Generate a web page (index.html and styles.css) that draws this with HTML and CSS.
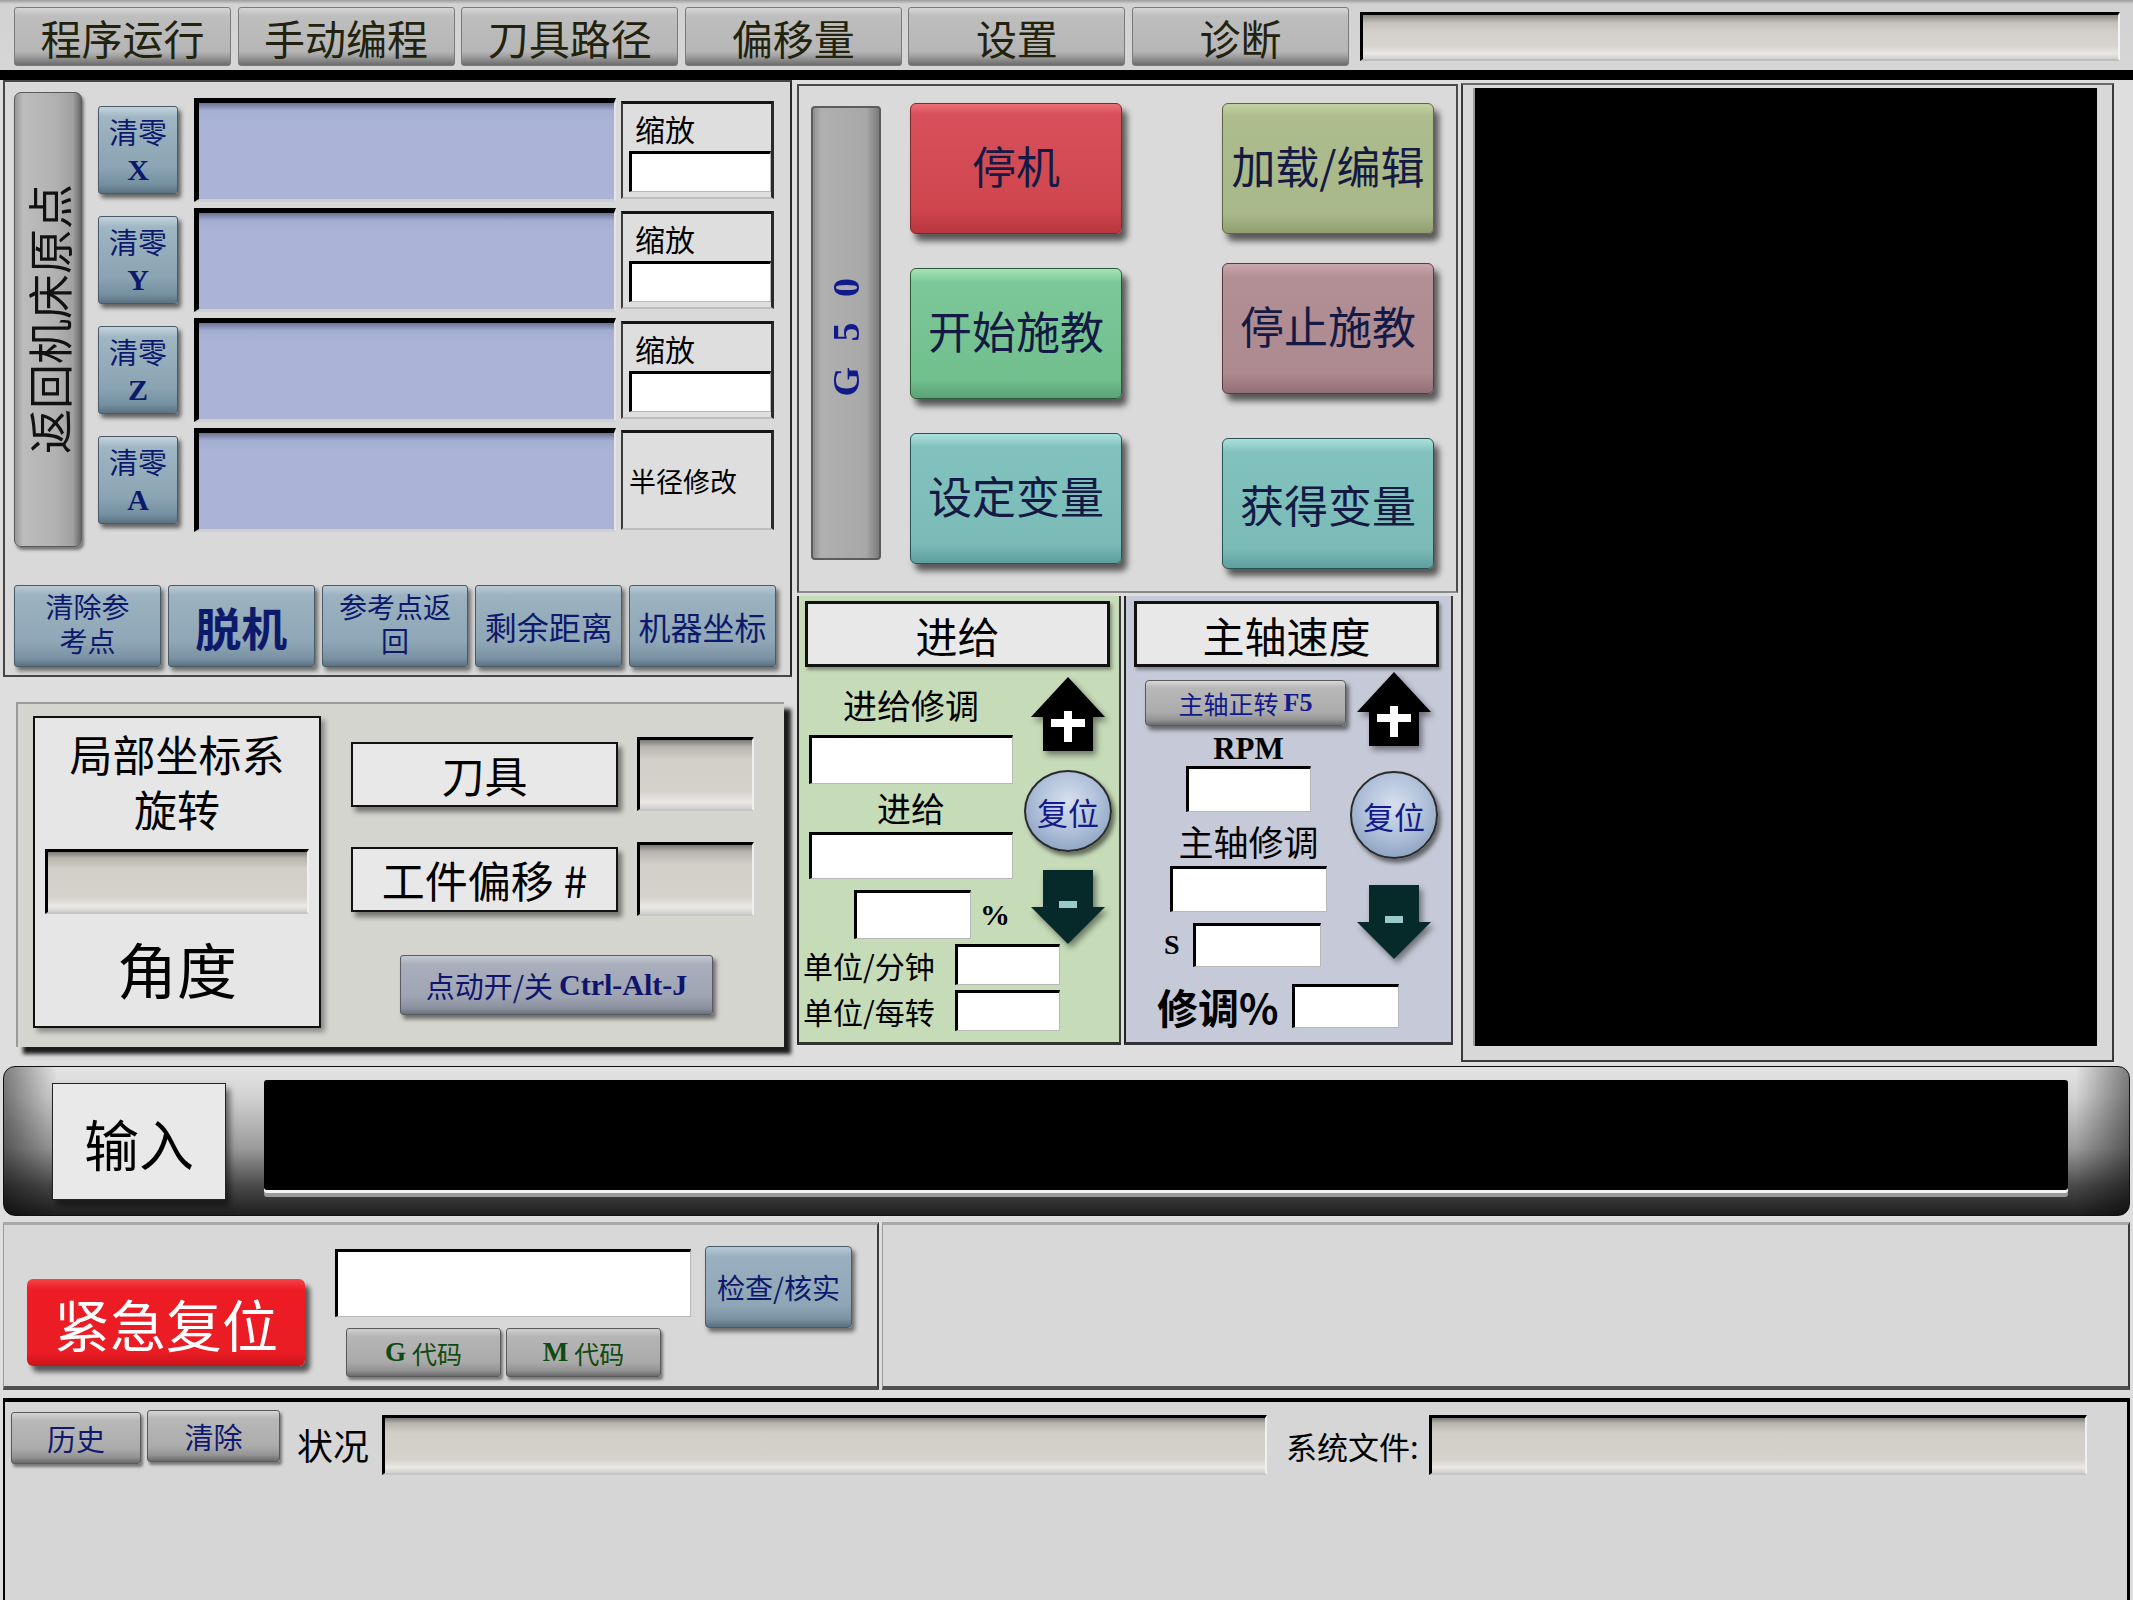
FILE: index.html
```html
<!DOCTYPE html>
<html>
<head>
<meta charset="utf-8">
<title>Mach</title>
<link rel="stylesheet" href="styles.css">
</head>
<body>
<div class="screen">
  <div class="tabbar">
    <div class="tab">程序运行</div>
    <div class="tab">手动编程</div>
    <div class="tab">刀具路径</div>
    <div class="tab">偏移量</div>
    <div class="tab">设置</div>
    <div class="tab">诊断</div>
    <div class="tabfield"></div>
  </div>
  <div class="topsep"></div>

  <div class="main">
    <div class="col-left">
      <div class="dro-panel">
        <div class="dro-top">
          <div class="home"><span>返回机床原点</span></div>
          <div class="axes">
            <div class="axis">
              <div class="zero">清零<b>X</b></div>
              <div class="dro"></div>
              <div class="scale"><span>缩放</span><div class="white-in scale-in"></div></div>
            </div>
            <div class="axis">
              <div class="zero">清零<b>Y</b></div>
              <div class="dro"></div>
              <div class="scale"><span>缩放</span><div class="white-in scale-in"></div></div>
            </div>
            <div class="axis">
              <div class="zero">清零<b>Z</b></div>
              <div class="dro"></div>
              <div class="scale"><span>缩放</span><div class="white-in scale-in"></div></div>
            </div>
            <div class="axis">
              <div class="zero">清零<b>A</b></div>
              <div class="dro"></div>
              <div class="scale radius"><span>半径修改</span></div>
            </div>
          </div>
        </div>
        <div class="dro-bottom">
          <div class="bbtn two">清除参<br>考点</div>
          <div class="bbtn big">脱机</div>
          <div class="bbtn two">参考点返<br>回</div>
          <div class="bbtn">剩余距离</div>
          <div class="bbtn">机器坐标</div>
        </div>
      </div>

      <div class="local-panel">
        <div class="rot-box">
          <div class="rot-title">局部坐标系<br>旋转</div>
          <div class="inset rot-field"></div>
          <div class="rot-angle">角度</div>
        </div>
        <div class="local-right">
          <div class="lrow"><div class="lbl-box">刀具</div><div class="inset small-inset"></div></div>
          <div class="lrow second"><div class="lbl-box">工件偏移 #</div><div class="inset small-inset"></div></div>
          <div class="jog-btn">点动开/关 <b>Ctrl-Alt-J</b></div>
        </div>
      </div>
    </div>

    <div class="col-mid">
      <div class="cmd-panel">
        <div class="g50"><span>G 5 0</span></div>
        <div class="cmd-grid">
          <div class="cbtn red">停机</div>
          <div class="cbtn olive">加载/编辑</div>
          <div class="cbtn green">开始施教</div>
          <div class="cbtn mauve">停止施教</div>
          <div class="cbtn teal">设定变量</div>
          <div class="cbtn teal get">获得变量</div>
        </div>
      </div>

      <div class="rate-row">
        <div class="feed">
          <div class="ptitle">进给</div>
          <div class="rbody">
            <div class="rleft">
              <div class="rlbl l1">进给修调</div>
              <div class="white-in fin1"></div>
              <div class="rlbl l2">进给</div>
              <div class="white-in fin2"></div>
              <div class="pct-row"><div class="white-in fin3"></div><span>%</span></div>
            </div>
            <div class="rright">
              <svg class="arrow up" viewBox="0 0 74 74"><polygon points="37,0 74,40 62,40 62,74 12,74 12,40 0,40" fill="#000"/><rect x="33" y="34" width="8" height="31" fill="#fff"/><rect x="20" y="42" width="34" height="8" fill="#fff"/></svg>
              <div class="reset">复位</div>
              <svg class="arrow down" viewBox="0 0 74 74"><polygon points="12,0 62,0 62,37 74,37 37,74 0,37 12,37" fill="#062a2a"/><rect x="28" y="31" width="18" height="7" fill="#9ccaca"/></svg>
            </div>
          </div>
          <div class="unit-row"><span>单位/分钟</span><div class="white-in uin"></div></div>
          <div class="unit-row u2"><span>单位/每转</span><div class="white-in uin"></div></div>
        </div>

        <div class="spindle">
          <div class="ptitle">主轴速度</div>
          <div class="rbody sbody">
            <div class="rleft">
              <div class="f5btn">主轴正转 <b>F5</b></div>
              <div class="rpm">RPM</div>
              <div class="white-in sin1"></div>
              <div class="rlbl l3">主轴修调</div>
              <div class="white-in sin2"></div>
              <div class="s-row"><b>S</b><div class="white-in sin3"></div></div>
            </div>
            <div class="rright">
              <svg class="arrow up sup" viewBox="0 0 74 74"><polygon points="37,0 74,40 62,40 62,74 12,74 12,40 0,40" fill="#000"/><rect x="33" y="34" width="8" height="31" fill="#fff"/><rect x="20" y="42" width="34" height="8" fill="#fff"/></svg>
              <div class="reset sreset">复位</div>
              <svg class="arrow down sdown" viewBox="0 0 74 74"><polygon points="12,0 62,0 62,37 74,37 37,74 0,37 12,37" fill="#062a2a"/><rect x="28" y="31" width="18" height="7" fill="#9ccaca"/></svg>
            </div>
          </div>
          <div class="ovr-row"><span>修调%</span><div class="white-in oin"></div></div>
        </div>
      </div>
    </div>

    <div class="toolpath"><div class="tp-inner"></div></div>
  </div>

  <div class="inputbar">
    <div class="in-label">输入</div>
    <div class="in-field"></div>
  </div>

  <div class="mdi-row">
    <div class="mdi-panel">
      <div class="estop">紧急复位</div>
      <div class="mdi-col">
        <div class="white-in mdi-in"></div>
        <div class="code-row">
          <div class="code-btn"><b>G</b> 代码</div>
          <div class="code-btn"><b>M</b> 代码</div>
        </div>
      </div>
      <div class="verify">检查/核实</div>
    </div>
    <div class="mdi-empty"></div>
  </div>

  <div class="status">
    <div class="sbtn">历史</div>
    <div class="sbtn clr">清除</div>
    <div class="s-lbl">状况</div>
    <div class="inset s-field1"></div>
    <div class="s-lbl2">系统文件:</div>
    <div class="inset s-field2"></div>
  </div>
</div>
</body>
</html>
```

FILE: styles.css
```css
* { box-sizing: border-box; margin: 0; padding: 0; }
html, body { width: 2133px; height: 1600px; overflow: hidden; }
body {
  background: #dedede;
  font-family: "Liberation Serif", "Noto Sans CJK SC", serif;
  color: #000;
}
b { font-family: "Liberation Serif", "Noto Sans CJK SC", serif; font-weight: 700; }

.screen { width: 2133px; height: 1600px; display: flex; flex-direction: column; }

/* generic fields */
.inset {
  background: linear-gradient(#7c7a76 0, #b8b4ae 10%, #d2cec8 28%, #d5d1cb 75%, #ebe9e6 90%, #cfcfcf 100%);
  border-top: 3px solid #000;
  border-left: 3px solid #000;
  border-right: 2px solid #f0f0f0;
  border-bottom: 2px solid #c6c6c6;
}
.white-in {
  background: #fff;
  border-top: 3px solid #000;
  border-left: 3px solid #000;
  border-right: 1px solid #b8b8b8;
  border-bottom: 1px solid #b8b8b8;
}

/* tab bar */
.tabbar {
  height: 70px;
  display: flex;
  align-items: flex-start;
  gap: 6.6px;
  padding: 7px 0 0 14px;
  background: linear-gradient(#9c9c9c 0, #d2d2d2 4px, #d6d6d6 100%);
}
.tab {
  width: 217px;
  height: 59px;
  display: flex;
  align-items: center;
  justify-content: center;
  font-family: "Noto Sans CJK SC", sans-serif;
  font-size: 41px;
  color: #22220e;
  background: linear-gradient(#d6d6d6, #bebebe 14%, #b6b6b6 76%, #a2a2a2 84%, #6c6c6c);
  border: 1px solid #7a7a7a;
  border-radius: 3px;
}
.tabfield {
  margin-left: 4.4px;
  margin-top: 5px;
  width: 760px;
  height: 49px;
  background: linear-gradient(#8a8884 0, #c4c0ba 18%, #d4d0ca 40%, #d7d3cd 70%, #e9e7e4 88%, #d0d0d0 100%);
  border-top: 3px solid #000;
  border-left: 3px solid #000;
  border-right: 2px solid #f4f4f4;
  border-bottom: 2px solid #bdbdbd;
}
.topsep { height: 10px; background: #000; }

/* main area */
.main { height: 982px; display: flex; align-items: flex-start; }
.col-left { width: 789px; margin-left: 3px; }
.col-mid { width: 661px; margin-left: 5px; }

/* DRO panel */
.dro-panel {
  height: 597px;
  background: #d9d9d9;
  border: 2px solid #464646;
  border-right-color: #2a2a2a;
  padding: 10px 14px 8px 9px;
}
.dro-top { display: flex; gap: 16px; }
.home {
  width: 68px;
  height: 455px;
  border-radius: 7px;
  background: linear-gradient(to right, #969696, #bcbcbc 12%, #b2b2b2 60%, #a0a0a0 88%, #666);
  border: 1px solid #5a5a5a;
  box-shadow: 2px 3px 3px rgba(0,0,0,.45);
  display: flex;
  align-items: center;
  justify-content: center;
}
.home span {
  writing-mode: vertical-rl;
  text-orientation: sideways;
  transform: rotate(180deg);
  font-family: "Noto Sans CJK SC", sans-serif;
  font-size: 45px;
  line-height: 1;
  color: #111;
}
.axes { margin-top: 6px; display: flex; flex-direction: column; gap: 6px; }
.axis { display: flex; align-items: center; height: 104px; }
.zero {
  width: 80px;
  height: 88px;
  margin-right: 16px;
  display: flex;
  flex-direction: column;
  align-items: center;
  justify-content: center;
  font-family: "Liberation Serif", "Noto Sans CJK SC", serif;
  font-size: 29px;
  line-height: 36px;
  color: #0d1a6c;
  background: linear-gradient(#c3d3dc, #9fb6c3 12%, #8aa4b3 70%, #7590a0 90%, #5b7282);
  border: 1px solid #4a5a66;
  border-radius: 3px;
  box-shadow: 3px 4px 4px rgba(0,0,0,.55);
  padding-top: 4px;
}
.zero b { font-size: 30px; line-height: 36px; }
.dro {
  width: 422px;
  height: 104px;
  margin-right: 5px;
  background: linear-gradient(#6a7294 0, #a4aed2 8%, #abb4d7 20%, #abb4d7 100%);
  border-top: 5px solid #000;
  border-left: 5px solid #000;
  border-right: 2px solid #e4e4e4;
  border-bottom: 3px solid #cfcfcf;
}
.scale {
  width: 153px;
  height: 98px;
  background: #dedede;
  border-top: 3px solid #151515;
  border-left: 2px solid #3a3a3a;
  border-right: 3px solid #2a2a2a;
  border-bottom: 2px solid #bdbdbd;
  display: flex;
  flex-direction: column;
  justify-content: space-between;
  padding: 5px 3px 5px 6px;
}
.scale span, .radius span {
  font-family: "Noto Sans CJK SC", sans-serif;
  font-size: 30px;
  line-height: 38px;
  padding-left: 6px;
}
.scale-in { width: 142px; height: 41px; }
.scale.radius { justify-content: center; height: 100px; }
.radius span { font-size: 27px; padding-left: 0; }

.dro-bottom { display: flex; gap: 7px; margin-top: 38px; height: 82px; }
.bbtn {
  flex: 1;
  display: flex;
  align-items: center;
  justify-content: center;
  text-align: center;
  font-family: "Noto Sans CJK SC", sans-serif;
  font-size: 32px;
  line-height: 36px;
  color: #0d1a6c;
  background: linear-gradient(#b9cad4, #9cb2c0 12%, #8ea6b6 70%, #7a92a2 90%, #5c7282);
  border: 1px solid #4a5a66;
  border-radius: 3px;
  box-shadow: 3px 4px 4px rgba(0,0,0,.5);
}
.bbtn.two {
  font-family: "Liberation Serif", "Noto Sans CJK SC", serif;
  font-size: 28px;
  line-height: 34px;
}
.bbtn.big { font-size: 46px; font-weight: 700; }

/* local coordinate panel */
.local-panel {
  margin: 25px 0 0 13px;
  width: 768px;
  height: 345px;
  background: #d5d5cf;
  border-top: 2px solid #9a9a9a;
  border-left: 2px solid #9a9a9a;
  box-shadow: 7px 7px 4px #1c1c1c;
  display: flex;
  align-items: flex-start;
  padding: 12px 0 0 15px;
}
.rot-box {
  width: 288px;
  height: 312px;
  background: #e6e6e6;
  border: 2px solid #111;
  box-shadow: 4px 4px 5px rgba(0,0,0,.35);
  display: flex;
  flex-direction: column;
  align-items: center;
  font-family: "Noto Sans CJK SC", sans-serif;
}
.rot-title {
  margin-top: 12px;
  font-family: "Liberation Serif", "Noto Sans CJK SC", serif;
  font-size: 43px;
  line-height: 55px;
  text-align: center;
}
.rot-field { margin-top: 9px; width: 264px; height: 65px; }
.rot-angle { margin-top: 18px; font-size: 60px; line-height: 72px; }
.local-right { margin-left: 30px; margin-top: 21px; display: flex; flex-direction: column; }
.lrow { display: flex; align-items: center; height: 74px; gap: 19px; }
.lrow.second { margin-top: 31px; }
.lbl-box {
  width: 267px;
  height: 65px;
  background: #e8e8e8;
  border: 2px solid #111;
  box-shadow: 4px 5px 5px rgba(0,0,0,.45);
  display: flex;
  align-items: center;
  justify-content: center;
  font-family: "Noto Sans CJK SC", sans-serif;
  font-size: 43px;
}
.small-inset { width: 117px; height: 74px; }
.jog-btn {
  margin: 39px 0 0 49px;
  width: 313px;
  height: 60px;
  display: flex;
  align-items: center;
  justify-content: center;
  gap: 6px;
  font-family: "Noto Sans CJK SC", sans-serif;
  font-size: 29px;
  color: #10146c;
  background: linear-gradient(#c4c8d0, #a8aebc 15%, #9ea4b2 70%, #8a909e 90%, #6a707c);
  border: 1px solid #5a5a62;
  border-radius: 3px;
  box-shadow: 3px 4px 4px rgba(0,0,0,.5);
}
.jog-btn b { font-size: 30px; }

/* command panel */
.cmd-panel {
  margin-top: 4px;
  height: 509px;
  background: #dadada;
  border: 2px solid #4a4a4a;
  border-bottom-color: #8a8a8a;
  display: flex;
  align-items: flex-start;
  padding: 17px 0 0 12px;
}
.g50 {
  margin-top: 3px;
  width: 70px;
  height: 454px;
  background: linear-gradient(to right, #8e8e8e, #b0b0b0 12%, #a8a8a8 80%, #7c7c7c);
  border: 2px solid #5c5c5c;
  border-radius: 4px;
  display: flex;
  align-items: center;
  justify-content: center;
}
.g50 span {
  writing-mode: vertical-rl;
  text-orientation: sideways;
  transform: rotate(180deg);
  font-family: "Liberation Serif", serif;
  font-weight: 700;
  font-size: 38px;
  letter-spacing: 8px;
  color: #101a8a;
}
.cmd-grid {
  margin-left: 29px;
  display: grid;
  grid-template-columns: 212px 212px;
  grid-auto-rows: 131px;
  column-gap: 100px;
  row-gap: 34px;
}
.cbtn {
  border-radius: 6px;
  display: flex;
  align-items: center;
  justify-content: center;
  font-family: "Noto Sans CJK SC", sans-serif;
  font-size: 44px;
  color: #141a44;
  box-shadow: 5px 7px 6px rgba(0,0,0,.6);
  padding-bottom: 8px;
}
.cbtn.mauve { margin-top: -5px; margin-bottom: 5px; }
.cbtn.get { margin-top: 5px; margin-bottom: -5px; padding-bottom: 0; }
.red { background: linear-gradient(#ec7078, #d6505a 8%, #d0464f 80%, #b8363e); border: 1px solid #7a2a30; }
.olive { background: linear-gradient(#c4d0a0, #adbc8c 10%, #a9b88a 85%, #909e70); border: 1px solid #5c6640; }
.green { background: linear-gradient(#a8e4b6, #7cc898 10%, #72bf8e 85%, #5aa476); border: 1px solid #2a5a3a; }
.mauve { background: linear-gradient(#caa8ae, #b28e95 10%, #ad8990 85%, #946e76); border: 1px solid #5a3a40; }
.teal { background: linear-gradient(#ace0dc, #82c2be 10%, #7abbb8 85%, #5e9e9c); border: 1px solid #2a5454; }

/* feed / spindle */
.rate-row { margin-top: 3px; height: 449px; display: flex; gap: 3px; }
.feed, .spindle {
  height: 449px;
  border-left: 2px solid #222;
  border-right: 2px solid #3a3a3a;
  border-bottom: 3px solid #333;
  display: flex;
  flex-direction: column;
}
.feed { width: 324px; background: #c6dbb8; padding: 5px 0 0 6px; }
.spindle { width: 329px; background: #c6cad8; padding: 5px 0 0 8px; }
.ptitle {
  width: 305px;
  height: 66px;
  background: #e8e8e8;
  border: 3px solid #111;
  box-shadow: 2px 3px 3px rgba(0,0,0,.35);
  display: flex;
  align-items: center;
  justify-content: center;
  font-family: "Noto Sans CJK SC", sans-serif;
  font-size: 42px;
}
.rbody { display: flex; height: 277px; margin-left: -6px; }
.sbody { height: 305px; margin-left: -8px; }
.rleft { width: 224px; display: flex; flex-direction: column; align-items: center; }
.sbody .rleft { width: 223px; padding-left: 22px; }
.rright { width: 90px; display: flex; flex-direction: column; align-items: center; }
.rlbl { font-family: "Noto Sans CJK SC", sans-serif; font-size: 34px; line-height: 42px; }
.l1 { margin-top: 17px; }
.fin1 { margin-top: 9px; width: 204px; height: 49px; }
.l2 { margin-top: 3px; }
.fin2 { margin-top: 3px; width: 204px; height: 47px; }
.pct-row { margin-top: 11px; margin-left: 42px; display: flex; align-items: center; gap: 9px; }
.pct-row span { font-family: "Liberation Serif", serif; font-weight: 700; font-size: 30px; }
.fin3 { width: 117px; height: 49px; }
.arrow { width: 74px; height: 74px; filter: drop-shadow(3px 4px 3px rgba(0,0,0,.45)); overflow: visible; }
.arrow.up { margin-top: 10px; }
.reset {
  margin-top: 19px;
  width: 88px;
  height: 88px;
  border-radius: 50%;
  background: radial-gradient(circle at 50% 38%, #d6e0ee 0, #b2c2da 45%, #8ea4c4 80%, #6a80a0 100%);
  border: 2px solid #2a2a2a;
  box-shadow: 3px 4px 4px rgba(0,0,0,.5);
  display: flex;
  align-items: center;
  justify-content: center;
  font-family: "Noto Sans CJK SC", sans-serif;
  font-size: 31px;
  color: #141a8a;
}
.arrow.down { margin-top: 18px; }
.unit-row { display: flex; align-items: center; height: 41px; margin-left: 0; }
.unit-row span { width: 152px; font-family: "Noto Sans CJK SC", sans-serif; font-size: 30px; margin-left: -2px; }
.unit-row.u2 { margin-top: 5px; }
.uin { width: 105px; height: 41px; }

.f5btn {
  margin-top: 13px;
  margin-left: -6px;
  width: 201px;
  height: 46px;
  display: flex;
  align-items: center;
  justify-content: center;
  gap: 5px;
  font-family: "Noto Sans CJK SC", sans-serif;
  font-size: 25px;
  color: #141a8a;
  background: linear-gradient(#d8d8d8, #b8b8b8 15%, #acacac 70%, #949494 88%, #6c6c6c);
  border: 1px solid #5a5a5a;
  border-radius: 4px;
  box-shadow: 3px 4px 4px rgba(0,0,0,.5);
}
.f5btn b { font-size: 26px; }
.rpm { margin-top: 7px; font-family: "Liberation Serif", serif; font-weight: 700; font-size: 31px; line-height: 31px; }
.sin1 { margin-top: 2px; width: 125px; height: 46px; }
.l3 { margin-top: 6px; font-size: 35px; line-height: 46px; }
.sin2 { margin-top: 2px; width: 157px; height: 46px; }
.s-row { margin-top: 11px; align-self: flex-start; margin-left: 16px; display: flex; align-items: center; gap: 13px; }
.s-row b { font-size: 28px; }
.sin3 { width: 128px; height: 44px; }
.arrow.sup { margin-top: 5px; }
.sreset { margin-top: 25px; }
.arrow.sdown { margin-top: 26px; }
.ovr-row { margin-top: 10px; display: flex; align-items: center; margin-left: 23px; gap: 14px; }
.ovr-row span { font-family: "Noto Sans CJK SC", sans-serif; font-weight: 700; font-size: 41px; line-height: 48px; }
.oin { width: 107px; height: 44px; }

/* tool path */
.toolpath {
  margin-left: 3px;
  margin-top: 3px;
  width: 653px;
  height: 979px;
  background: #d8d8d8;
  border: 2px solid #3a3a3a;
  border-top-color: #6a6a6a;
  padding: 3px 15px 14px 10px;
}
.tp-inner { width: 100%; height: 100%; background: #000; border-left: 2px solid #9a9a9a; }

/* input bar */
.inputbar {
  margin: 4px 3px 0 3px;
  height: 150px;
  border-radius: 12px;
  border: 1px solid #111;
  background:
    linear-gradient(to right, rgba(0,0,0,.45), rgba(0,0,0,0) 2.5%, rgba(0,0,0,0) 97.5%, rgba(0,0,0,.45)),
    linear-gradient(#e4e4e4, #d2d2d2 20%, #9a9a9a 55%, #4a4a4a 80%, #1e1e1e);
  display: flex;
  align-items: flex-start;
  padding-left: 48px;
}
.in-label {
  margin-top: 16px;
  width: 174px;
  height: 117px;
  background: #e9e9e9;
  border: 1px solid #222;
  box-shadow: 4px 6px 6px rgba(0,0,0,.5);
  display: flex;
  align-items: center;
  justify-content: center;
  font-family: "Noto Sans CJK SC", sans-serif;
  font-size: 55px;
}
.in-field {
  margin-left: 38px;
  margin-top: 13px;
  width: 1804px;
  height: 110px;
  background: #000;
  border-radius: 3px;
  box-shadow: 0 3px 0 #f4f4f4, 0 7px 0 #9a9a9a;
}

/* MDI row */
.mdi-row { margin-top: 6px; height: 168px; display: flex; gap: 3px; padding-left: 3px; }
.mdi-panel, .mdi-empty {
  height: 168px;
  background: #d8d8d8;
  border-top: 3px solid #a8a8a8;
  border-bottom: 4px solid #505050;
  border-right: 2px solid #3a3a3a;
  border-left: 1px solid #9a9a9a;
}
.mdi-panel { width: 876px; display: flex; align-items: flex-start; }
.mdi-empty { width: 1248px; }
.estop {
  margin-left: 23px;
  margin-top: 54px;
  width: 278px;
  height: 87px;
  border-radius: 6px;
  background: linear-gradient(#f4444a, #ee1c24 12%, #ea1c24 85%, #c8141a);
  box-shadow: 5px 6px 5px rgba(0,0,0,.6);
  display: flex;
  align-items: center;
  justify-content: center;
  font-family: "Noto Sans CJK SC", sans-serif;
  font-size: 56px;
  color: #fff;
}
.mdi-col { margin-left: 30px; margin-top: 24px; display: flex; flex-direction: column; }
.mdi-in { width: 356px; height: 68px; }
.code-row { margin-top: 11px; margin-left: 11px; display: flex; gap: 5px; }
.code-btn {
  width: 155px;
  height: 49px;
  display: flex;
  align-items: center;
  justify-content: center;
  gap: 6px;
  font-family: "Noto Sans CJK SC", sans-serif;
  font-size: 25px;
  color: #0e4a12;
  background: linear-gradient(#d0d0d0, #b6b6b6 15%, #aaaaaa 70%, #949494 88%, #6a6a6a);
  border: 1px solid #5a5a5a;
  border-radius: 3px;
  box-shadow: 2px 3px 3px rgba(0,0,0,.45);
}
.code-btn b { font-size: 27px; }
.verify {
  margin-left: 14px;
  margin-top: 21px;
  width: 147px;
  height: 82px;
  display: flex;
  align-items: center;
  justify-content: center;
  font-family: "Noto Sans CJK SC", sans-serif;
  font-size: 28px;
  color: #0d1a6c;
  background: linear-gradient(#b6c8d4, #9ab0c0 12%, #8ea6b6 72%, #7a92a2 90%, #5a7080);
  border: 1px solid #4a5a66;
  border-radius: 4px;
  box-shadow: 3px 4px 4px rgba(0,0,0,.5);
}

/* status */
.status {
  margin-top: 8px;
  margin-left: 3px;
  margin-right: 3px;
  height: 202px;
  background: #d6d6d6;
  border-top: 4px solid #000;
  border-left: 2px solid #000;
  border-right: 3px solid #000;
  display: flex;
  align-items: flex-start;
  padding: 10px 0 0 6px;
}
.sbtn {
  width: 130px;
  height: 52px;
  display: flex;
  align-items: center;
  justify-content: center;
  font-family: "Noto Sans CJK SC", sans-serif;
  font-size: 29px;
  color: #101a6c;
  background: linear-gradient(#d4d4d4, #b8b8b8 15%, #acacac 70%, #949494 88%, #6a6a6a);
  border: 1px solid #5a5a5a;
  border-radius: 3px;
  box-shadow: 2px 3px 3px rgba(0,0,0,.45);
}
.sbtn.clr { margin-left: 6px; margin-top: -2px; width: 133px; }
.s-lbl { margin-left: 17px; margin-top: 8px; font-family: "Noto Sans CJK SC", sans-serif; font-size: 36px; line-height: 48px; }
.s-field1 { margin-left: 13px; margin-top: 3px; width: 885px; height: 60px; }
.s-lbl2 { margin-left: 19px; margin-top: 13px; font-family: "Noto Sans CJK SC", sans-serif; font-size: 31px; line-height: 42px; }
.s-field2 { margin-left: 10px; margin-top: 3px; width: 658px; height: 60px; }
```
